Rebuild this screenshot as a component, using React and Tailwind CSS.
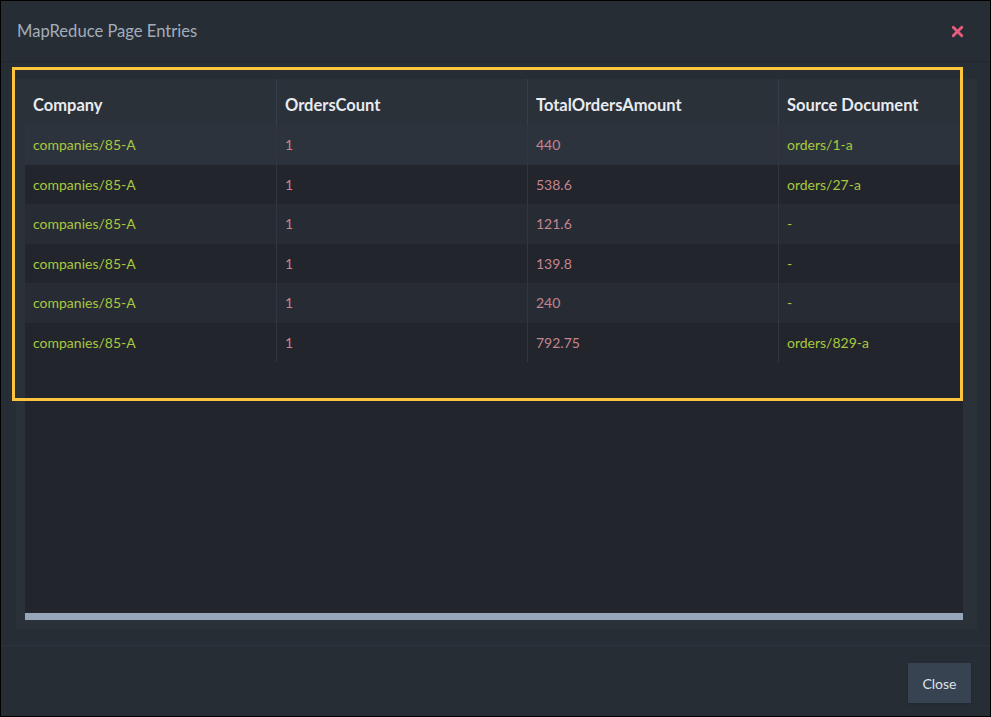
import {X} from "lucide-react";

const rows = [
  {company: "companies/85-A", count: "1", amount: "440", source: "orders/1-a"},
  {company: "companies/85-A", count: "1", amount: "538.6", source: "orders/27-a"},
  {company: "companies/85-A", count: "1", amount: "121.6", source: "-"},
  {company: "companies/85-A", count: "1", amount: "139.8", source: "-"},
  {company: "companies/85-A", count: "1", amount: "240", source: "-"},
  {company: "companies/85-A", count: "1", amount: "792.75", source: "orders/829-a"},
];

const rowBg = ["bg-[#2d333c]", "bg-[#22252c]", "bg-[#272b33]", "bg-[#22252c]", "bg-[#272b33]", "bg-[#22252c]"];

export default function App() {
  return (
    <div className="relative w-[991px] h-[717px] border border-black bg-[#272d35] flex flex-col font-['Lato','Noto_Sans',sans-serif]">
      <div className="h-[61px] shrink-0 flex items-center justify-between pl-4 pr-6 border-b border-[#21262d]">
        <h1 className="text-[16.6px] text-[#a3adba]">MapReduce Page Entries</h1>
        <X className="w-[17px] h-[17px] text-[#ea5c7d]" strokeWidth={4} />
      </div>

      <div className="flex-1 pt-[17px] pb-4 pl-[15px] pr-[13px]">
        <div className="h-full bg-[#2b3139] pl-[9px] pr-[14px] pb-[9px] flex flex-col">
          <div className="flex-1 bg-[#22252c] overflow-hidden">
            <div className="w-[1004px]">
              <div className="flex h-[46px] bg-[#2b3139] text-[16.5px] font-bold text-[#e8ebef]">
                {["Company", "OrdersCount", "TotalOrdersAmount", "Source Document"].map((h, i) => (
                  <div key={h} className={`w-[251px] flex items-center pl-2 pt-[6px] ${i > 0 ? "border-l border-[#373e48]" : ""}`}>{h}</div>
                ))}
              </div>
              {rows.map((r, i) => (
                <div key={i} className={`flex h-[39.5px] text-[14px] ${rowBg[i]}`}>
                  <div className="w-[251px] flex items-center pl-2 text-[#a7c83f]">{r.company}</div>
                  <div className="w-[251px] flex items-center pl-2 border-l border-[#31363f] text-[#c5848f]">{r.count}</div>
                  <div className="w-[251px] flex items-center pl-2 border-l border-[#31363f] text-[#c5848f]">{r.amount}</div>
                  <div className="w-[251px] flex items-center pl-2 border-l border-[#31363f] text-[#a7c83f]">{r.source}</div>
                </div>
              ))}
            </div>
          </div>
          <div className="h-[7px] shrink-0 bg-[#97a6b8]"></div>
        </div>
      </div>

      <div className="h-[71px] shrink-0 border-t border-[#2e343d] flex items-start justify-end pt-[17px] pr-[19px]">
        <button className="h-10 w-[63px] bg-[#384352] text-[14px] text-[#dde2e8] shadow-sm">Close</button>
      </div>

      <div className="absolute left-[11px] top-[66px] w-[951px] h-[334px] border-[3px] border-[#fdc53d] pointer-events-none"></div>
    </div>
  );
}
